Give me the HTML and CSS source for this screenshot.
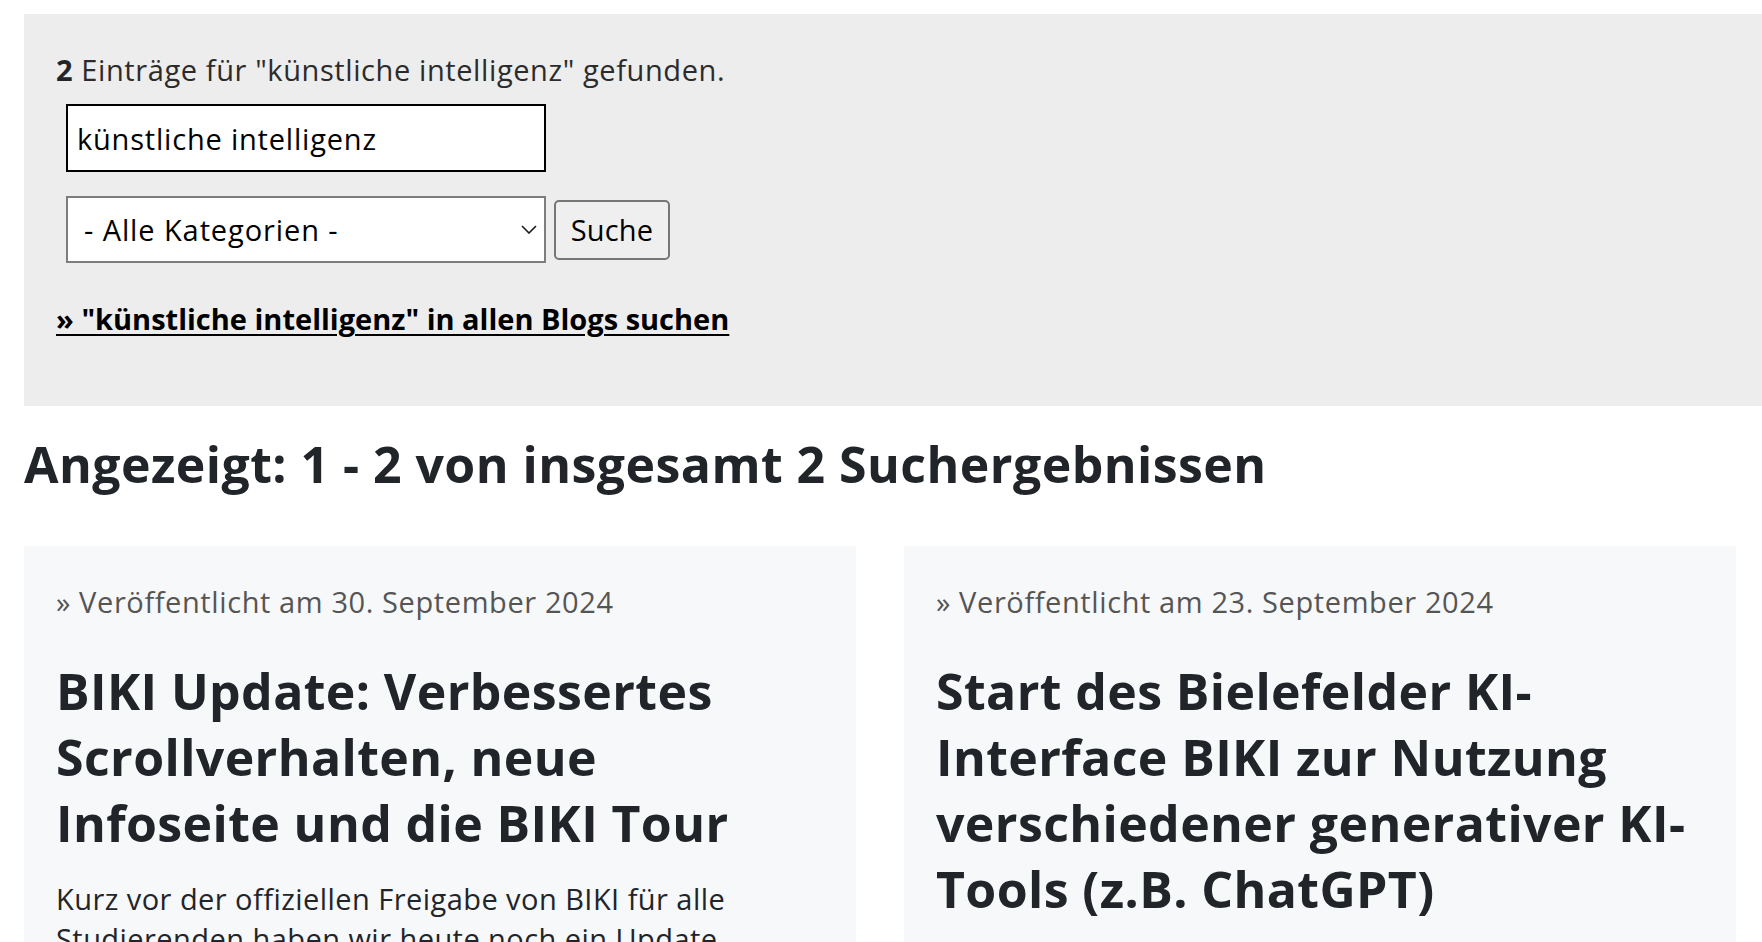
FILE: index.html
```html
<!DOCTYPE html>
<html lang="de">
<head>
<meta charset="utf-8">
<title>Suche – künstliche intelligenz</title>
<link rel="stylesheet" href="styles.css">
</head>
<body>
<div class="page">
  <section class="search-panel">
    <p class="result-count"><strong>2</strong> Einträge für "künstliche intelligenz" gefunden.</p>
    <form class="search-form" action="#">
      <input class="search-input" type="text" value="künstliche intelligenz" aria-label="Suchbegriff">
      <div class="search-row">
        <div class="select-wrap">
          <select class="category-select" aria-label="Kategorie">
            <option>- Alle Kategorien -</option>
          </select>
          <svg class="select-chevron" viewBox="0 0 16 9" aria-hidden="true">
            <path d="M1 1l7 7 7-7"/>
          </svg>
        </div>
        <button class="search-button" type="submit">Suche</button>
      </div>
    </form>
    <a class="all-blogs-link" href="#">» "künstliche intelligenz" in allen Blogs suchen</a>
  </section>

  <h1 class="results-heading">Angezeigt: 1 - 2 von insgesamt 2 Suchergebnissen</h1>

  <div class="results-grid">
    <article class="result-card">
      <p class="result-date">» Veröffentlicht am 30. September 2024</p>
      <h2 class="result-title">BIKI Update: Verbessertes Scrollverhalten, neue Infoseite und die BIKI Tour</h2>
      <p class="result-excerpt">Kurz vor der offiziellen Freigabe von BIKI für alle Studierenden haben wir heute noch ein Update veröffentlicht.</p>
    </article>
    <article class="result-card">
      <p class="result-date">» Veröffentlicht am 23. September 2024</p>
      <h2 class="result-title">Start des Bielefelder KI-Interface BIKI zur Nutzung verschiedener generativer KI-Tools (z.B. ChatGPT)</h2>
      <p class="result-excerpt">Ab heute steht allen Studierenden und Beschäftigten das Bielefelder KI-Interface BIKI zur Verfügung.</p>
    </article>
  </div>
</div>
</body>
</html>
```

FILE: styles.css
```css
* {
  box-sizing: border-box;
}

html,
body {
  margin: 0;
  padding: 0;
  background: #ffffff;
}

body {
  font-family: "Open Sans", "Noto Sans", sans-serif;
  font-size: 29px;
  line-height: 42px;
  letter-spacing: 0.6px;
  color: #212529;
}

.page {
  padding: 14px 26px 0 24px;
}

/* Grey search box at the top */
.search-panel {
  background: #ededed;
  margin-right: -26px;
  padding: 35px 32px 66px;
}

.result-count {
  margin: 0;
  color: #2b2b2b;
}

.result-count strong {
  font-weight: 700;
  color: #212529;
}

.search-form {
  margin: 13px 0 0 10px;
  display: flex;
  flex-direction: column;
  gap: 24px;
}

.search-input {
  width: 480px;
  height: 68px;
  border: 2px solid #000000;
  background: #ffffff;
  padding: 0 9px;
  font: inherit;
  letter-spacing: 0.8px;
  color: #000000;
  outline: none;
}

.search-row {
  display: flex;
  align-items: center;
  gap: 8px;
}

.select-wrap {
  position: relative;
  width: 480px;
  height: 67px;
}

.category-select {
  -webkit-appearance: none;
  appearance: none;
  width: 100%;
  height: 100%;
  border: 2px solid #7d7d7d;
  border-radius: 0;
  background: #ffffff;
  padding: 0 40px 0 16px;
  font: inherit;
  letter-spacing: 0.9px;
  color: #000000;
}

.select-chevron {
  position: absolute;
  right: 9px;
  top: 29px;
  width: 16px;
  height: 9px;
  fill: none;
  stroke: #1a1a1a;
  stroke-width: 1.6;
  pointer-events: none;
}

.search-button {
  width: 116px;
  height: 60px;
  border: 2px solid #767676;
  border-radius: 5px;
  background: #efefef;
  font: inherit;
  letter-spacing: 0.2px;
  color: #000000;
  padding: 0;
}

.all-blogs-link {
  display: inline-block;
  margin-top: 35px;
  font-weight: 700;
  letter-spacing: 0;
  color: #000000;
  text-decoration: underline;
  text-decoration-thickness: 2px;
  text-underline-offset: 4px;
}

/* Result count heading */
.results-heading {
  margin: 28px 0 52px;
  font-size: 50px;
  line-height: 60px;
  font-weight: 700;
  letter-spacing: 0.45px;
  color: #212529;
}

/* Two result cards side by side */
.results-grid {
  display: grid;
  grid-template-columns: 1fr 1fr;
  gap: 48px;
}

.result-card {
  background: #f7f8fa;
  padding: 35px 32px 32px;
}

.result-date {
  margin: 0;
  color: #555555;
}

.result-title {
  margin: 35px 0 0;
  font-size: 50px;
  line-height: 66px;
  font-weight: 700;
  letter-spacing: 0.4px;
  color: #212529;
}

.result-excerpt {
  margin: 23px 0 0;
  line-height: 40px;
  letter-spacing: 0.45px;
  color: #212529;
}
```
